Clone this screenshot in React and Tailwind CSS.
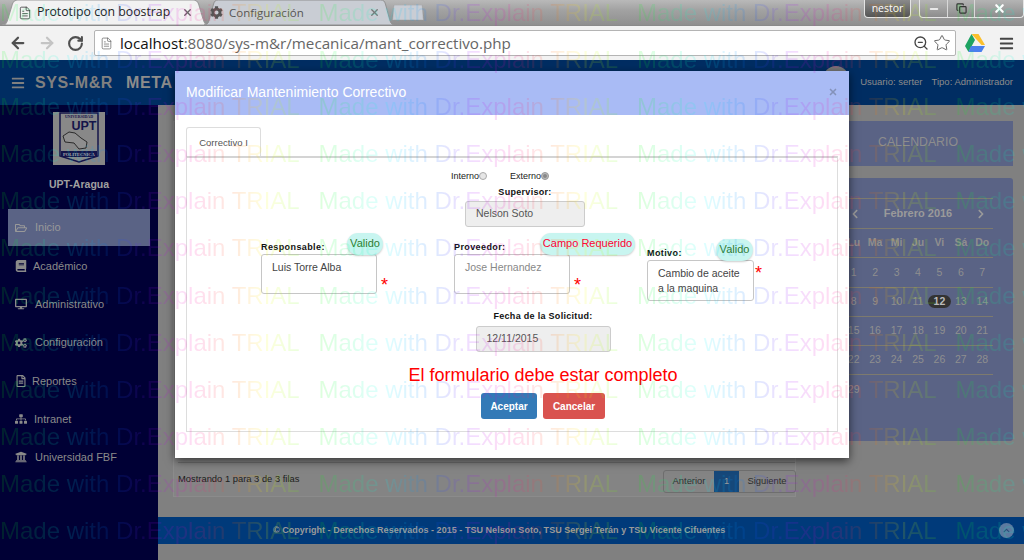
import React from 'react';
import { ArrowLeft, ArrowRight, RotateCw, ZoomOut, Star, X, Minus, Copy, FileText } from 'lucide-react';
import { FaBars, FaCog, FaRegFolderOpen, FaBook, FaDesktop, FaCogs, FaRegFileAlt, FaSitemap, FaUniversity, FaChevronLeft, FaChevronRight, FaChevronUp } from 'react-icons/fa';

const menu = [
  { label: 'Académico', Icon: FaBook, h: 'h-[38px]', gap: 'gap-[6px]' },
  { label: 'Administrativo', Icon: FaDesktop, h: 'h-[38px]', gap: 'gap-[8px]' },
  { label: 'Configuración', Icon: FaCogs, h: 'h-[39px]', gap: 'gap-[8px]' },
  { label: 'Reportes', Icon: FaRegFileAlt, h: 'h-[38px]', gap: 'gap-[5px]' },
  { label: 'Intranet', Icon: FaSitemap, h: 'h-[38px]', gap: 'gap-[7px]' },
  { label: 'Universidad FBF', Icon: FaUniversity, h: 'h-[38px]', gap: 'gap-[8px]' },
];

const days = ['Lu', 'Ma', 'Mi', 'Ju', 'Vi', 'Sá', 'Do'];
const weeks = [
  [1, 2, 3, 4, 5, 6, 7],
  [8, 9, 10, 11, 12, 13, 14],
  [15, 16, 17, 18, 19, 20, 21],
  [22, 23, 24, 25, 26, 27, 28],
  [29],
];

const rows = [0, 1, 2, 3, 4, 5, 6, 7, 8, 9, 10, 11];
const cols = [0, 1, 2, 3];

function Watermark() {
  return (
    <div className="absolute inset-0 z-50 pointer-events-none overflow-hidden opacity-[0.13] font-['Liberation_Sans',sans-serif] text-[24px] leading-[47.1px] -mt-[11px]">
      {rows.map(r => (
        <div key={r} className="flex h-[47.1px]">
          {cols.map(c => (
            <span key={c} className="w-[318.5px] shrink-0 whitespace-nowrap">
              <span className="inline-block text-transparent bg-clip-text bg-[linear-gradient(90deg,#00ff00,#00ffff_22%,#0060ff_38%,#aa00ff_52%,#ff00aa_64%,#ff6000_78%,#ffff00_88%,#66ff00)]">Made with Dr.Explain TRIAL</span>
            </span>
          ))}
        </div>
      ))}
    </div>
  );
}

function TabShape({ fill, stroke }) {
  return (
    <svg className="absolute inset-0 w-full h-full" viewBox="0 0 200 25" preserveAspectRatio="none">
      <path d="M0 25 C4 25 5 22 6 18 L10 4 C11 1 12 0 15 0 L185 0 C188 0 189 1 190 4 L194 18 C195 22 196 25 200 25 Z" fill={fill} stroke={stroke} />
    </svg>
  );
}

function Browser() {
  return (
    <>
      <div className="h-[25px] bg-[linear-gradient(180deg,#b9b9b9,#a2a2a2_40%,#8f8f8f)] flex relative font-['Open_Sans',sans-serif]">
        <div className="relative w-[207px] ml-[2px] h-[25px] shrink-0">
          <TabShape fill="#f2f2f2" stroke="#9a9a9a" />
          <div className="relative flex items-center h-full pl-[16px] pr-[16px] text-[12.3px] text-[#222]">
            <FileText size={14} strokeWidth={1.2} className="mr-[5px] shrink-0" />
            <span className="flex-1 whitespace-nowrap">Prototipo con boostrap</span>
            <X size={11} strokeWidth={3} className="text-[#666]" />
          </div>
        </div>
        <div className="relative w-[191px] -ml-[5px] h-[25px] shrink-0">
          <TabShape fill="#c9cdd4" stroke="#8f8f8f" />
          <div className="relative flex items-center h-full pl-[6px] pr-[15px] text-[11.5px] text-[#555]">
            <FaCog size={13} className="mr-[6px] shrink-0 text-[#555]" />
            <span className="flex-1 whitespace-nowrap">Configuración</span>
            <X size={11} strokeWidth={3} className="text-[#777]" />
          </div>
        </div>
        <div className="relative w-[32px] -ml-[3px] mt-[5px] h-[15px] shrink-0">
          <TabShape fill="#c9cdd4" stroke="#8f8f8f" />
        </div>
        <div className="ml-auto flex items-start">
          <div className="w-[47px] h-[18px] mr-[8px] rounded-b-[4px] border border-t-0 border-[#e4e4e4] bg-[linear-gradient(180deg,#8a8a8a,#555)] text-white text-[10.5px] leading-[17px] text-center">nestor</div>
          <div className="flex h-[18px] w-[105px] border border-t-0 border-[#e4e4e4] rounded-b-[4px] bg-[linear-gradient(180deg,#b4b4b4,#8d8d8d)] text-white">
            <div className="w-[28px] flex items-center justify-center border-r border-[#d8d8d8]"><Minus size={12} strokeWidth={3} /></div>
            <div className="w-[27px] flex items-center justify-center border-r border-[#d8d8d8]"><Copy size={11} strokeWidth={2.5} className="text-[#333]" /></div>
            <div className="flex-1 flex items-center justify-center"><X size={13} strokeWidth={4} /></div>
          </div>
        </div>
      </div>
      <div className="h-[35px] bg-[#f2f2f2] border-t border-[#8a8a8a] flex items-center">
        <ArrowLeft size={18} strokeWidth={3} className="ml-[9px] text-[#505050]" />
        <ArrowRight size={18} strokeWidth={3} className="ml-[11px] text-[#c4c4c4]" />
        <RotateCw size={17} strokeWidth={3} className="ml-[11px] text-[#505050]" />
        <div className="ml-[10px] w-[862px] h-[26px] bg-white border border-[#b4b4b4] rounded-[2px] flex items-center pl-[5px] pr-[4px] font-['Open_Sans',sans-serif] text-[15.2px] text-[#666] whitespace-nowrap">
          <FileText size={13} strokeWidth={1.2} className="mr-[7px] text-[#555] shrink-0" />
          <span className="text-[#111]">localhost</span>
          <span>:8080/sys-m&amp;r/mecanica/mant_correctivo.php</span>
          <ZoomOut size={16} strokeWidth={2} className="ml-auto text-[#444]" />
          <Star size={18} strokeWidth={1.2} className="ml-[4px] text-[#555]" />
        </div>
        <svg className="ml-[9px]" width="20" height="18" viewBox="0 0 20 18">
          <polygon points="6.5,0 13.5,0 20,11 16.5,11" fill="#fbc02d" />
          <polygon points="6.5,0 10,6 3.5,18 0,12" fill="#1ea362" />
          <polygon points="6,12 20,12 16.5,18 3.5,18" fill="#4a80ee" />
        </svg>
        <FaBars size={15} className="ml-[14px] text-[#444]" />
      </div>
    </>
  );
}

function Logo() {
  return (
    <svg className="mx-auto mt-[7px]" width="52" height="53" viewBox="0 0 52 53">
      <rect width="52" height="53" fill="#868686" />
      <path d="M7 1 H45 V44 L26 50 L7 44 Z" fill="#888" stroke="#14144a" strokeWidth="1.5" />
      <text x="26" y="6" fontSize="4" fontWeight="700" textAnchor="middle" fill="#14144a" fontFamily="Liberation Serif, serif">UNIVERSIDAD</text>
      <path d="M10 24 L16 20 L22 21 L28 26 L34 30 L33 36 L26 37 L21 31 L12 30 Z" fill="#8e8e8e" stroke="#111" strokeWidth="0.8" />
      <text x="31" y="18" fontSize="12.5" fontWeight="700" textAnchor="middle" fill="#14144a" fontFamily="Liberation Sans, sans-serif">UPT</text>
      <rect x="8" y="39" width="36" height="6" fill="#14144a" />
      <text x="26" y="44" fontSize="4.5" fontWeight="700" textAnchor="middle" fill="#aaa" fontFamily="Liberation Serif, serif">POLITECNICA</text>
    </svg>
  );
}

function Sidebar() {
  return (
    <div className="w-[158px] flex-1 shrink-0 bg-[#000035] text-[#8a8a8a] text-[11px]">
      <Logo />
      <div className="text-center font-bold text-[#a0a0a0] text-[10.5px] mt-[13px] h-[13px] leading-[13px]">UPT-Aragua</div>
      <div className="mx-[8px] mt-[18px] h-[37px] bg-[#5a6385] flex items-center pl-[7px] gap-[8px] text-[#999]">
        <FaRegFolderOpen size={12} />
        <span>Inicio</span>
      </div>
      <div className="mt-[1px]">
        {menu.map(({ label, Icon, h, gap }) => (
          <div key={label} className={`${h} flex items-center pl-[15px] ${gap}`}>
            <Icon size={12} className="shrink-0" />
            <span>{label}</span>
          </div>
        ))}
      </div>
    </div>
  );
}

function Calendar() {
  return (
    <div className="mt-[12px] h-[263px] bg-[#5a6385] rounded-[3px] pl-[20px] pt-[20px] text-[#8f8f8f] text-[10.5px]">
      <div className="w-[150px] border-t border-[#7d7a6e] h-[30px] flex items-center justify-between px-[7px] font-bold text-[#9a9a9a] text-[11px]">
        <FaChevronLeft size={10} />
        <span>Febrero 2016</span>
        <FaChevronRight size={10} />
      </div>
      <div className="w-[150px] border-t border-[#7d7a6e] h-[29.3px] grid grid-cols-7 items-center text-center font-bold">
        {days.map(d => <span key={d}>{d}</span>)}
      </div>
      {weeks.map((w, i) => (
        <div key={i} className="w-[150px] h-[29.3px] grid grid-cols-7 items-center text-center border-t border-[#7d7a6e]">
          {w.map(n => (
            <span key={n} className={n === 12 ? 'mx-[-1px] h-[13px] leading-[13px] rounded-full bg-[#333333] text-[#bbb] font-bold' : ''}>{n}</span>
          ))}
        </div>
      ))}
    </div>
  );
}

function Page() {
  return (
    <div className="flex h-[500px] font-['Liberation_Sans',sans-serif]">
      <div className="flex flex-col">
        <div className="w-[158px] h-[45px] bg-[#002d62] flex items-center pl-[11px] text-[#808080]">
          <FaBars size={14} />
          <span className="ml-[10px] font-bold text-[16px] tracking-[0.6px] whitespace-nowrap">SYS-M&amp;R</span>
        </div>
        <Sidebar />
      </div>
      <div className="flex-1 flex flex-col min-w-0">
        <div className="h-[45px] shrink-0 bg-[#002d62] flex items-center justify-between pr-[11px] text-[#8c8c8c]">
          <span className="font-bold text-[16px] tracking-[0.6px] -ml-[32px]">META</span>
          <div className="flex items-center gap-[9px] text-[9.5px]">
            <span className="w-[26px] h-[26px] rounded-full bg-[#777] -mt-[8px] mr-[2px]" />
            <span>Usuario: serter</span>
            <span>Tipo: Administrador</span>
          </div>
        </div>
        <div className="flex-1 bg-[#808080] flex flex-col">
          <div className="flex-1 flex pl-[15px] pr-[11px] pt-[16px]">
            <div className="w-[623px] h-[376px] border border-[#8b8b8b] bg-[#848484] flex flex-col justify-end pl-[4px] pb-[3px]">
              <div className="border-b border-[#6e6e6e] h-[6px]" />
              <div className="flex items-center justify-between h-[23px] mt-[7px] -mr-[1px] text-[9.4px]">
                <span className="text-[#1c1c1c] -mt-[5px]">Mostrando 1 para 3 de 3 filas</span>
                <div className="flex items-stretch h-[23px] border border-[#6e6e6e] rounded-[3px] text-[#2e2e2e] overflow-hidden">
                  <span className="w-[50px] flex items-center justify-center">Anterior</span>
                  <span className="w-[25px] flex items-center justify-center bg-[#16487a] text-[#9a9a9a]">1</span>
                  <span className="w-[56px] flex items-center justify-center">Siguiente</span>
                </div>
              </div>
            </div>
            <div className="ml-[27px] w-[190px]">
              <div className="h-[45px] pb-[2px] bg-[#5a6385] flex items-center justify-center text-[12.3px] text-[#8d8d8d]">CALENDARIO</div>
              <Calendar />
            </div>
          </div>
          <div className="h-[27px] shrink-0 bg-[#003a7a] flex items-center justify-between pl-[115px] pr-[10px] text-[9px] font-bold text-[#9a9a9a] tracking-[0.04px]">
            <span className="mt-[1px]">© Copyright - Derechos Reservados - 2015 - TSU Nelson Soto, TSU Sergei Terán y TSU Vicente Cifuentes</span>
            <span className="w-[15px] h-[15px] rounded-full bg-[#5d7aa0] flex items-center justify-center text-[#2c4b78]"><FaChevronUp size={7} /></span>
          </div>
          <div className="h-[16px] shrink-0" />
        </div>
      </div>
    </div>
  );
}

function Bubble({ className, children }) {
  return (
    <span className={`absolute top-[-7px] h-[22px] leading-[20px] rounded-[11px] bg-[#c8f5f0] shadow-[0_1px_2px_rgba(0,0,0,0.2)] text-center text-[11px] whitespace-nowrap ${className}`}>{children}</span>
  );
}

function Field({ label, className, boxClass, bubble, star, children }) {
  return (
    <div className={`relative ${className}`}>
      <div className="text-[9px] font-bold text-[#111] tracking-[0.4px] h-[14px] leading-[14px]">{label}</div>
      <div className={`border border-[#c6c6c6] rounded-[3px] px-[10px] py-[5px] text-[10.5px] leading-[15px] ${boxClass}`}>{children}</div>
      {bubble}
      {star}
    </div>
  );
}

function Modal() {
  return (
    <div className="absolute left-[175px] top-[71px] w-[674px] h-[387px] bg-white shadow-[0_3px_9px_rgba(0,0,0,0.6)] font-['Liberation_Sans',sans-serif] text-[#444]">
      <div className="h-[44px] pb-[2px] bg-[#a9bbf5] flex items-center justify-between pl-[11px] pr-[11px] text-white">
        <span className="text-[14px]">Modificar Mantenimiento Correctivo</span>
        <X size={10} strokeWidth={4} className="text-[#8492ba]" />
      </div>
      <div className="px-[11px] pt-[12px]">
        <div className="w-[75px] h-[30px] border border-[#ddd] border-b-0 rounded-t-[3px] text-[9.5px] text-[#555] flex items-center justify-center pt-[1px]">Correctivo I</div>
        <div className="h-[276px] border-x border-b border-[#ddd] border-t-2 border-t-[#d4d4d4] flex flex-col items-center text-[9.5px] -mt-[1px]">
          <div className="flex items-center mt-[12px] h-[14px] mr-[24px] text-[9px] text-[#222]">
            <span>Interno</span>
            <span className="w-[8px] h-[8px] rounded-full border border-[#aaa] bg-[#e6e6e6] -mt-[2px]" />
            <span className="ml-[23px]">Externo</span>
            <span className="w-[8px] h-[8px] rounded-full border border-[#999] bg-[#bbb] -mt-[2px] flex items-center justify-center"><span className="w-[4px] h-[4px] rounded-full bg-[#888]" /></span>
          </div>
          <div className="font-bold text-[#111] tracking-[0.3px] mt-[1px] h-[14px] leading-[14px] ml-[26px] text-[9px]">Supervisor:</div>
          <div className="w-[120px] h-[26px] ml-[26px] bg-[#eeeeee] border border-[#ccc] rounded-[3px] px-[10px] mt-[2px] flex items-center text-[10.5px] text-[#555]">Nelson Soto</div>
          <div className="flex w-full pl-[74px] mt-[6px] h-[74px]">
            <Field
              label="Responsable:"
              className="w-[116px] mt-[7px]"
              boxClass="h-[40px] text-[#444]"
              bubble={<Bubble className="left-[86px] w-[36px] text-[#2f7a2f]">Valido</Bubble>}
              star={<span className="absolute left-[120px] top-[30px] text-[18px] leading-[30px] text-[#ff0000]">*</span>}
            >Luis Torre Alba</Field>
            <Field
              label="Proveedor:"
              className="w-[116px] ml-[77px] mt-[7px]"
              boxClass="h-[40px] text-[#888]"
              bubble={<Bubble className="left-[86px] w-[95px] text-[#ff0033]">Campo Requerido</Bubble>}
              star={<span className="absolute left-[120px] top-[30px] text-[18px] leading-[30px] text-[#ff0000]">*</span>}
            >Jose Hernandez</Field>
            <Field
              label="Motivo:"
              className="w-[107px] ml-[77px] mt-[13px]"
              boxClass="h-[41px] text-[#444]"
              bubble={<Bubble className="left-[69px] w-[37px] text-[#2f7a2f]">Valido</Bubble>}
              star={<span className="absolute left-[108px] top-[12px] text-[18px] leading-[30px] text-[#ff0000]">*</span>}
            >Cambio de aceite a la maquina</Field>
          </div>
          <div className="font-bold text-[#111] tracking-[0.3px] mt-[2px] h-[14px] leading-[14px] ml-[62px] text-[9px]">Fecha de la Solicitud:</div>
          <div className="w-[135px] h-[26px] ml-[62px] bg-[#eeeeee] border border-[#ccc] rounded-[3px] px-[10px] mt-[3px] flex items-center text-[10.5px] text-[#555]">12/11/2015</div>
          <div className="mt-[12px] ml-[62px] text-[18px] leading-[22px] text-[#ff0000] whitespace-nowrap">El formulario debe estar completo</div>
          <div className="flex gap-[6px] ml-[62px] mt-[7px] text-[10px] font-bold text-white">
            <span className="w-[56px] h-[26px] rounded-[3px] bg-[#337ab7] flex items-center justify-center">Aceptar</span>
            <span className="w-[62px] h-[26px] rounded-[3px] bg-[#d9534f] flex items-center justify-center">Cancelar</span>
          </div>
        </div>
      </div>
    </div>
  );
}

export default function App() {
  return (
    <div className="relative w-[1024px] h-[560px] overflow-hidden bg-[#808080]">
      <Browser />
      <Page />
      <Modal />
      <Watermark />
    </div>
  );
}
